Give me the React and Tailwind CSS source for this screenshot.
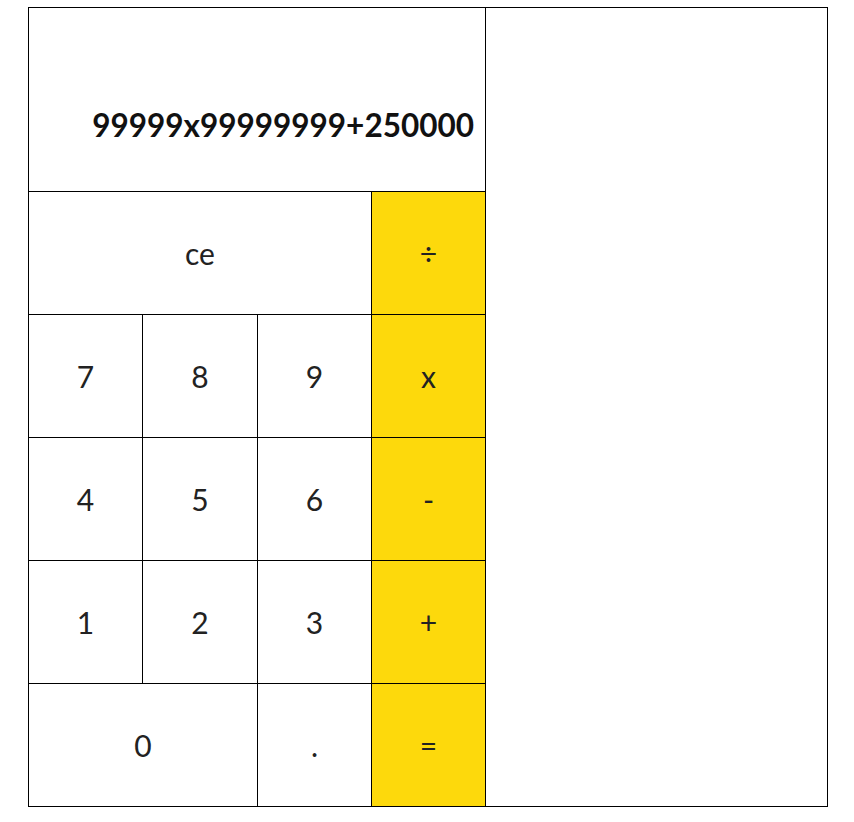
import React from "react";

const keys = [
  { label: "ce", span: "col-span-3" },
  { label: "÷", op: true },
  { label: "7" },
  { label: "8" },
  { label: "9" },
  { label: "x", op: true },
  { label: "4" },
  { label: "5" },
  { label: "6" },
  { label: "-", op: true },
  { label: "1" },
  { label: "2" },
  { label: "3" },
  { label: "+", op: true },
  { label: "0", span: "col-span-2" },
  { label: "." },
  { label: "=", op: true },
];

const App = () => {
  return (
    <div className="pt-[7px] pl-[28px] bg-white min-h-screen" style={{ fontFamily: "Lato, 'Liberation Sans', sans-serif" }}>
      <div className="flex w-[800px] h-[800px] border border-black">
        <div className="w-[457px] border-r border-black flex flex-col">
          <div className="h-[184px] shrink-0 border-b border-black flex items-end justify-end pr-[11px] pb-[50px]">
            <span className="text-[31.5px] font-bold text-[#111] leading-none">99999x99999999+250000</span>
          </div>
          <div className="grid grid-cols-[114px_115px_114px_113px] grid-rows-[123px_123px_123px_123px_122px]">
            {keys.map((k, i) => (
              <button
                key={i}
                className={`${k.span || ""} ${k.op ? "bg-[#fdd90c]" : "bg-white border-r"} ${i < 14 ? "border-b" : ""} border-black flex items-center justify-center text-[30px] text-[#222] font-normal`}
              >
                {k.label}
              </button>
            ))}
          </div>
        </div>
        <div className="flex-1"></div>
      </div>
    </div>
  );
};

export default App;
